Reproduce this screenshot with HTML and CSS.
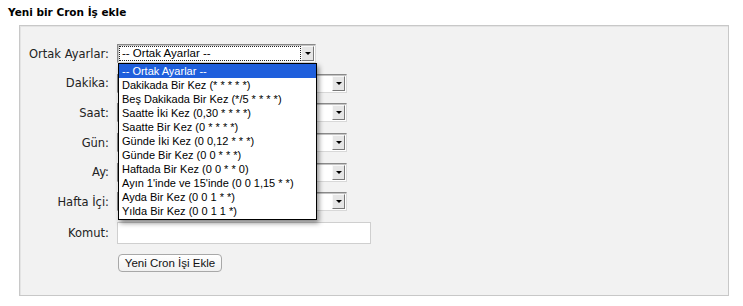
FILE: index.html
```html
<!DOCTYPE html>
<html lang="tr">
<head>
  <meta charset="UTF-8">
  <title>Yeni bir Cron İş ekle</title>
  <link rel="stylesheet" href="styles.css">
</head>
<body>

  <h3 class="title">Yeni bir Cron İş ekle</h3>

  <div class="panel">
    <div class="form-grid">
      <label>Ortak Ayarlar:</label>
      <div class="field">
        <div class="select select-short is-focused">
          <span class="select-text">-- Ortak Ayarlar --</span>
          <span class="arrow"></span>
        </div>
        <!-- open list of the select above -->
        <ul class="dropdown">
          <li class="active">-- Ortak Ayarlar --</li>
          <li>Dakikada Bir Kez (* * * * *)</li>
          <li>Beş Dakikada Bir Kez (*/5 * * * *)</li>
          <li>Saatte İki Kez (0,30 * * * *)</li>
          <li>Saatte Bir Kez (0 * * * *)</li>
          <li>Günde İki Kez (0 0,12 * * *)</li>
          <li>Günde Bir Kez (0 0 * * *)</li>
          <li>Haftada Bir Kez (0 0 * * 0)</li>
          <li>Ayın 1'inde ve 15'inde (0 0 1,15 * *)</li>
          <li>Ayda Bir Kez (0 0 1 * *)</li>
          <li>Yılda Bir Kez (0 0 1 1 *)</li>
        </ul>
      </div>

      <label>Dakika:</label>
      <div class="select"><span class="select-text"></span><span class="arrow"></span></div>

      <label>Saat:</label>
      <div class="select"><span class="select-text"></span><span class="arrow"></span></div>

      <label>Gün:</label>
      <div class="select"><span class="select-text"></span><span class="arrow"></span></div>

      <label>Ay:</label>
      <div class="select"><span class="select-text"></span><span class="arrow"></span></div>

      <label>Hafta İçi:</label>
      <div class="select"><span class="select-text"></span><span class="arrow"></span></div>

      <label>Komut:</label>
      <input type="text" class="text-input">

      <span></span>
      <div class="actions"><button type="button" class="btn">Yeni Cron İşi Ekle</button></div>
    </div>
  </div>

</body>
</html>
```

FILE: styles.css
```css
body {
  margin: 0;
  font-family: "DejaVu Sans", Verdana, sans-serif;
  background-color: #fff;
  color: #000;
}

.title {
  font-size: 10.5px;
  font-weight: bold;
  margin: 0;
  padding: 6px 0 0 8px;
  height: 25px;
  box-sizing: border-box;
}

.panel {
  margin: 0 14px 0 19px;
  height: 271px;
  box-sizing: border-box;
  border: 1px solid #c8c8c8;
  box-shadow: inset 1px 1px 0 #e4e4e4;
  background-color: #f2f2f2;
  padding: 18px 0 0 0;
}

.form-grid {
  display: grid;
  grid-template-columns: 89px auto;
  column-gap: 8px;
  row-gap: 10.7px;
  align-items: center;
  justify-items: start;
}

.form-grid label {
  justify-self: end;
  font-size: 11.5px;
  color: #222;
}

.field {
  position: relative;
}

.select {
  width: 230px;
  height: 19px;
  box-sizing: border-box;
  display: flex;
  align-items: center;
  background-color: #fff;
  border: 1px solid;
  border-color: #8a8a8a #d8d8d8 #d8d8d8 #8a8a8a;
  box-shadow: inset 1px 1px 0 #c4c4c4;
  padding: 1px;
}

.select-short {
  width: 199px;
}

.select-text {
  flex: 1;
  height: 100%;
  box-sizing: border-box;
  padding-left: 3px;
  font-family: "Liberation Sans", Arial, sans-serif;
  font-size: 11.5px;
  line-height: 15px;
}

.is-focused .select-text {
  outline: 1px dotted #222;
  outline-offset: -1px;
}

.arrow {
  width: 13px;
  height: 15px;
  box-sizing: border-box;
  background-color: #e6e6e6;
  border: 1px solid;
  border-color: #f8f8f8 #777 #777 #f8f8f8;
  position: relative;
}

.arrow::after {
  content: "";
  position: absolute;
  left: 3px;
  top: 5px;
  border-left: 3px solid transparent;
  border-right: 3px solid transparent;
  border-top: 3px solid #000;
}

.dropdown {
  position: absolute;
  top: 19px;
  left: 1px;
  width: 199px;
  box-sizing: border-box;
  margin: 0;
  padding: 0 0 1px 0;
  list-style: none;
  background-color: #fff;
  border: 1px solid #000;
  box-shadow: 2px 3px 5px rgba(0, 0, 0, 0.45);
  font-family: "Liberation Sans", Arial, sans-serif;
  font-size: 11px;
  z-index: 5;
}

.dropdown li {
  height: 14px;
  line-height: 14px;
  padding-left: 3px;
  white-space: nowrap;
}

.dropdown li.active {
  background-color: #1f5fdc;
  color: #fff;
}

.text-input {
  width: 254px;
  height: 22px;
  box-sizing: border-box;
  margin: 0;
  border: 1px solid #cfcfcf;
  background-color: #fff;
  padding: 2px 4px;
}

.actions {
  margin-top: -3px;
}

.btn {
  width: 104px;
  height: 18px;
  box-sizing: border-box;
  margin: 0 0 0 1px;
  padding: 0;
  border: 1px solid #a8a8a8;
  border-radius: 4px;
  background: linear-gradient(#ffffff, #f0f0f0);
  font-family: "Liberation Sans", Arial, sans-serif;
  font-size: 11.5px;
  color: #111;
}
```
